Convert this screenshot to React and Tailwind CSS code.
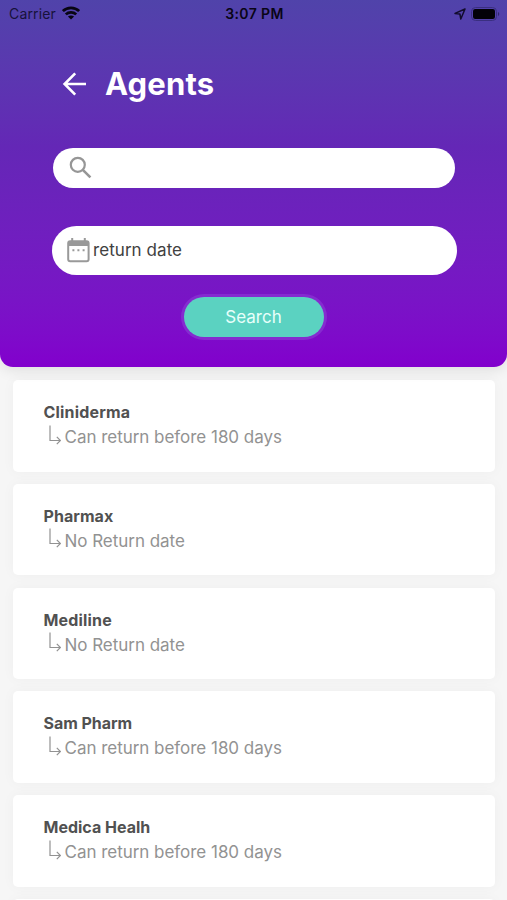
const agents = [
  { name: "Cliniderma", nameSpacing: "tracking-[0.18px]", note: "Can return before 180 days" },
  { name: "Pharmax", nameSpacing: "tracking-[0.05px]", note: "No Return date" },
  { name: "Mediline", nameSpacing: "tracking-[0.18px]", note: "No Return date" },
  { name: "Sam Pharm", nameSpacing: "tracking-[-0.05px]", note: "Can return before 180 days" },
  { name: "Medica Healh", nameSpacing: "tracking-[0px]", note: "Can return before 180 days" },
  { name: "", nameSpacing: "", note: "" },
];

function StatusBar() {
  return (
    <div className="grid h-7 grid-cols-3 items-center pl-[9px] pr-[7px] text-black">
      <div className="flex items-center gap-[6px]">
        <span className="text-[14px] leading-7 tracking-[0.15px] text-[#17123a]">Carrier</span>
        <svg className="-mt-[2px]" width="18" height="14" viewBox="0 0 18 14" fill="none" stroke="#080512" strokeWidth="2.7">
          <path d="M0.9 5.1C5.3 0.8 12.7 0.8 17.1 5.1" />
          <path d="M3.8 8.4C6.7 5.6 11.3 5.6 14.2 8.4" />
          <path d="M9 13.6L5.9 10.5C7.7 9 10.3 9 12.1 10.5Z" fill="#080512" stroke="none" />
        </svg>
      </div>
      <span className="text-center text-[14px] font-semibold leading-7 tracking-[0.4px] text-[#090516]">3:07 PM</span>
      <div className="flex items-center justify-end gap-[5px]">
        <svg className="-mt-[1px]" width="12" height="12" viewBox="0 0 12 12" fill="none" stroke="#120c2c" strokeWidth="1.5" strokeLinejoin="round">
          <path d="M11 1L1 5.4L5.9 6L6.8 11Z" />
        </svg>
        <svg className="-mt-[1px]" width="29" height="14" viewBox="0 0 29 14">
          <rect x="0.5" y="0.5" width="25" height="13" rx="4" fill="none" stroke="#3a2f80" />
          <rect x="2" y="2" width="22" height="10" rx="2.2" fill="#030108" />
          <path d="M27 5C28.7 5.7 28.7 8.3 27 9Z" fill="#30266f" />
        </svg>
      </div>
    </div>
  );
}

function AgentCard({ name, nameSpacing, note }) {
  return (
    <article className="h-[91.5px] shrink-0 rounded-[5px] bg-white pl-[30.5px] pt-[21px] shadow-[0_0_14px_rgba(0,0,0,0.035)]">
      {name && (
        <>
          <h2 className={`h-[23px] whitespace-nowrap text-[16px] font-bold leading-[23px] text-[#515151] ${nameSpacing}`}>{name}</h2>
          <div className="flex h-[27px] items-center">
            <svg className="ml-[5px] mr-[4px] -mt-[6px] shrink-0" width="12" height="20" viewBox="0 0 12 20" fill="none" stroke="#929292" strokeWidth="1.2">
              <path d="M1 0.5V15.5H11.2M7.8 11.8L11.4 15.5L7.8 19.2" />
            </svg>
            <p className="whitespace-nowrap text-[17px] leading-[27px] tracking-[-0.03px] text-[#929292]">{note}</p>
          </div>
        </>
      )}
    </article>
  );
}

export default function App() {
  return (
    <main className="flex h-[900px] w-[507px] flex-col overflow-hidden bg-[#f6f6f6] font-['Inter',sans-serif]">
      <header className="z-10 h-[367px] shrink-0 rounded-b-[13px] bg-linear-to-b from-[#5043aa] via-[#6427b6] via-40% to-[#8200cd] shadow-[0_3px_14px_rgba(0,20,0,0.1)]">
        <StatusBar />
        <div className="mt-[31px] flex h-[50px] items-center pl-[62px]">
          <svg className="mr-[19px]" width="24" height="24" viewBox="0 0 24 24" fill="none" stroke="#fff" strokeWidth="2.6">
            <path d="M24 12H2.6M13.2 1.4L2.6 12L13.2 22.6" />
          </svg>
          <h1 className="text-[31px] font-bold leading-[50px] tracking-[0.15px] text-white">Agents</h1>
        </div>
        <div className="ml-[52.5px] mt-[38.5px] flex h-[40px] w-[402.5px] items-center rounded-full bg-white pl-[16.5px]">
          <svg width="24" height="24" viewBox="0 0 24 24" fill="none" stroke="#969696" strokeWidth="2.2">
            <circle cx="8.8" cy="8.8" r="7" />
            <path d="M13.8 13.8L21.4 21.4" strokeWidth="2.6" />
          </svg>
        </div>
        <div className="ml-[51.5px] mt-[38px] flex h-[49px] w-[405px] items-center rounded-full bg-white pl-[15.5px]">
          <svg className="-mt-[1px]" width="23" height="26" viewBox="0 0 23 26" fill="none">
            <rect x="1.2" y="4.2" width="20.4" height="20" rx="2" stroke="#999" strokeWidth="2" />
            <path d="M1 4H22V9H1ZM4.2 1H6.2V5H4.2ZM16.8 1H18.8V5H16.8Z" fill="#999" />
            <path d="M5.4 12.2H7.4V14.2H5.4ZM10.4 12.2H12.4V14.2H10.4ZM15.6 12.2H17.6V14.2H15.6Z" fill="#999" />
          </svg>
          <span className="ml-[3px] whitespace-nowrap text-[17px] leading-[49px] tracking-[0.06px] text-[#414141]">return date</span>
        </div>
        <button className="mx-auto mt-[22px] block h-[40px] w-[140px] rounded-full bg-[#5bd2c1] text-center text-[17px] leading-[40px] text-[#e7fffa] shadow-[0_0_0_3px_#852bd0]">Search</button>
      </header>
      <section className="mt-[13px] flex flex-col gap-[12.3px] pl-[13px] pr-[12px]">
        {agents.map((agent, index) => <AgentCard key={index} {...agent} />)}
      </section>
    </main>
  );
}
